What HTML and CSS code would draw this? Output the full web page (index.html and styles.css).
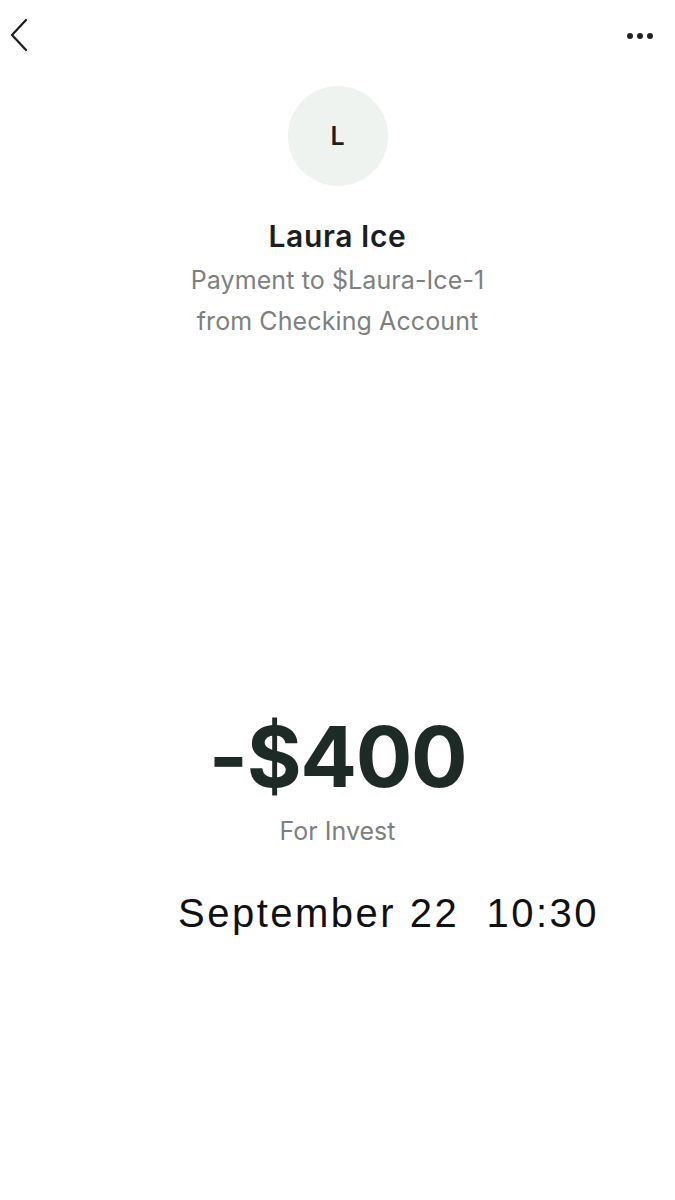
FILE: index.html
```html
<!DOCTYPE html>
<html lang="en">
<head>
  <meta charset="UTF-8">
  <meta name="viewport" content="width=device-width, initial-scale=1.0">
  <title>Payment Details</title>
  <link rel="stylesheet" href="styles.css">
</head>
<body>

  <div class="screen">
    <div class="top-bar">
      <button class="icon-btn back-btn" aria-label="Back">
        <svg width="20" height="34" viewBox="0 0 20 34">
          <path d="M17 2 L3 17 L17 32" fill="none" stroke="#1c1c1c" stroke-width="2.2" stroke-linecap="round" stroke-linejoin="round"/>
        </svg>
      </button>
      <button class="icon-btn more-btn" aria-label="More">
        <span class="dot"></span><span class="dot"></span><span class="dot"></span>
      </button>
    </div>

    <div class="profile">
      <div class="avatar">L</div>
      <div class="name">Laura Ice</div>
      <div class="subtitle">Payment to $Laura-Ice-1<br>from Checking Account</div>
    </div>

    <div class="amount-block">
      <div class="amount">-$400</div>
      <div class="note">For Invest</div>
    </div>

    <div class="date">September 22&nbsp; 10:30</div>
  </div>

</body>
</html>
```

FILE: styles.css
```css
* { margin: 0; padding: 0; box-sizing: border-box; }
body { font-family: 'Inter', 'Liberation Sans', sans-serif; background: #fff; color: #1e2a26; }
.screen { width: 675px; height: 1200px; display: flex; flex-direction: column; }

/* top bar */
.top-bar { display: flex; justify-content: space-between; align-items: center; padding: 17px 22px 0 9px; height: 52px; }
.icon-btn { background: none; border: none; display: flex; align-items: center; cursor: pointer; }
.more-btn { gap: 4px; padding-top: 2px; }
.dot { width: 6px; height: 6px; border-radius: 50%; background: #222; }

/* profile */
.profile { display: flex; flex-direction: column; align-items: center; margin-top: 34px; }
.avatar { width: 100px; height: 100px; border-radius: 50%; background: #eef3ef; display: flex; align-items: center; justify-content: center; font-size: 25px; font-weight: 600; color: #1b1f1d; }
.name { margin-top: 32px; font-size: 30px; font-weight: 600; color: #1c1f1e; letter-spacing: 0.6px; line-height: 36px; }
.subtitle { margin-top: 6px; font-size: 25px; line-height: 41px; color: #7c807e; text-align: center; letter-spacing: 0.1px; }

/* amount */
.amount-block { display: flex; flex-direction: column; align-items: center; margin-top: 373px; }
.amount { font-size: 84px; font-weight: 700; line-height: 1; letter-spacing: -1.4px; color: #1e2a26; }
.note { margin-top: 17px; font-size: 25px; color: #7c807e; }

.date { margin-top: 45px; padding-left: 178px; font-family: 'Liberation Sans', 'Inter', sans-serif; font-size: 40px; letter-spacing: 2.5px; color: #111; }
```
